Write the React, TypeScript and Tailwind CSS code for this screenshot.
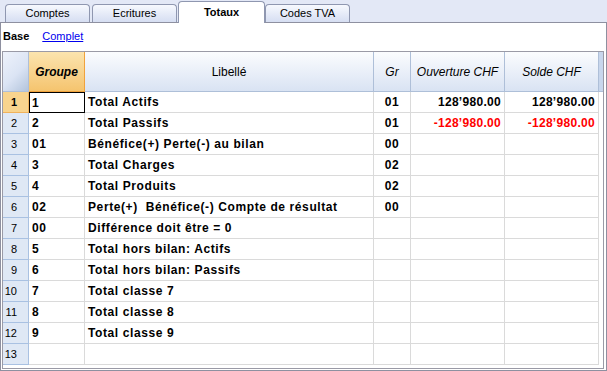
import React from "react";

type Row = {
  groupe: string;
  libelle: string;
  gr: string;
  ouverture?: string;
  solde?: string;
  negative?: boolean;
};

const rows: Row[] = [
  { groupe: "1", libelle: "Total Actifs", gr: "01", ouverture: "128’980.00", solde: "128’980.00" },
  { groupe: "2", libelle: "Total Passifs", gr: "01", ouverture: "-128’980.00", solde: "-128’980.00", negative: true },
  { groupe: "01", libelle: "Bénéfice(+) Perte(-) au bilan", gr: "00" },
  { groupe: "3", libelle: "Total Charges", gr: "02" },
  { groupe: "4", libelle: "Total Produits", gr: "02" },
  { groupe: "02", libelle: "Perte(+)\u00a0 Bénéfice(-) Compte de résultat", gr: "00" },
  { groupe: "00", libelle: "Différence doit être = 0", gr: "" },
  { groupe: "5", libelle: "Total hors bilan: Actifs", gr: "" },
  { groupe: "6", libelle: "Total hors bilan: Passifs", gr: "" },
  { groupe: "7", libelle: "Total classe 7", gr: "" },
  { groupe: "8", libelle: "Total classe 8", gr: "" },
  { groupe: "9", libelle: "Total classe 9", gr: "" },
  { groupe: "", libelle: "", gr: "" },
];

const tabs = ["Comptes", "Ecritures", "Totaux", "Codes TVA"];

export default function App() {
  return (
    <div
      className="w-[607px] h-[371px] bg-[#e3e8f6] flex flex-col overflow-hidden text-black"
      style={{ fontFamily: '"Liberation Sans", Arial, sans-serif' }}
    >
      {/* tab strip */}
      <div className="h-[22px] flex items-end pl-[5px] gap-[2px] relative z-10">
        {tabs.map((t) => {
          const active = t === "Totaux";
          return active ? (
            <div
              key={t}
              className="w-[87px] h-[22px] -mb-[1px] -ml-[1px] -mr-[2px] bg-white border border-b-0 border-[#8f97b0] rounded-t-[4px] flex items-center justify-center text-[11px] font-bold pb-[1px]"
            >
              {t}
            </div>
          ) : (
            <div
              key={t}
              className="w-[85px] h-[18px] bg-gradient-to-b from-[#f7f9fe] to-[#d6def2] border border-b-0 border-[#8f97b0] rounded-t-[4px] flex items-center justify-center text-[11px]"
            >
              {t}
            </div>
          );
        })}
      </div>

      {/* panel */}
      <div className="flex-1 bg-white border border-[#8e90a0] pl-[1px] pr-[2px] pb-[1px] flex flex-col">
        <div className="h-[28px] flex items-center gap-[13px] pl-[1px] text-[11px] pb-[1px]">
          <span className="font-bold">Base</span>
          <span className="text-[#0000ee] underline">Complet</span>
        </div>

        <div className="flex-1 border border-[#9a9aa6] flex flex-col">
          {/* header */}
          <div className="grid grid-cols-[26px_56px_289px_37px_94px_94px_1fr] h-[40px] text-[12px]">
            <div className="bg-[linear-gradient(135deg,#eef2fb_0%,#dbe4f4_55%,#b3c4dc_100%)] border-r border-b border-[#aebfd8]" />
            <div className="bg-gradient-to-b from-[#fbe4ae] to-[#f5c46e] border-r border-b border-[#f0a23c] flex items-center justify-center font-bold italic">
              Groupe
            </div>
            <div className="bg-gradient-to-b from-[#fbfcfe] to-[#d9e3f3] border-r border-b border-[#aebfd8] flex items-center justify-center">
              Libellé
            </div>
            <div className="bg-gradient-to-b from-[#fbfcfe] to-[#d9e3f3] border-r border-b border-[#aebfd8] flex items-center justify-center italic">
              Gr
            </div>
            <div className="bg-gradient-to-b from-[#fbfcfe] to-[#d9e3f3] border-r border-b border-[#aebfd8] flex items-center justify-center italic">
              Ouverture CHF
            </div>
            <div className="bg-gradient-to-b from-[#fbfcfe] to-[#d9e3f3] border-r border-b border-[#aebfd8] flex items-center justify-center italic">
              Solde CHF
            </div>
            <div className="bg-[#c8d6ec] border-b border-[#aebfd8]" />
          </div>

          {/* rows */}
          {rows.map((r, i) => {
            const sel = i === 0;
            const valColor = r.negative ? "text-[#ff0000]" : "text-black";
            return (
              <div
                key={i}
                className="grid grid-cols-[26px_56px_289px_37px_94px_94px_1fr] h-[21px] text-[12px] font-bold tracking-[0.6px]"
              >
                <div
                  className={
                    sel
                      ? "bg-[#f8d48e] border-r border-b border-[#f0b25c] flex items-center justify-end pr-[11px] text-[11px] font-bold tracking-normal"
                      : "bg-[#dfe8f5] border-r border-b border-[#a9c1e2] flex items-center justify-end pr-[11px] text-[11px] font-normal tracking-normal"
                  }
                >
                  {i + 1}
                </div>
                <div
                  className={
                    sel
                      ? "border border-black flex items-center pl-[2px]"
                      : "border-r border-b border-[#dadada] flex items-center pl-[3px]"
                  }
                >
                  {r.groupe}
                </div>
                <div className="border-r border-b border-[#dadada] flex items-center pl-[3px] whitespace-nowrap overflow-hidden">
                  {r.libelle}
                </div>
                <div className="border-r border-b border-[#dadada] flex items-center justify-center">
                  {r.gr}
                </div>
                <div className={`border-r border-b border-[#dadada] flex items-center justify-end pr-[3px] tracking-[0.3px] ${valColor}`}>
                  {r.ouverture}
                </div>
                <div className={`border-r border-b border-[#dadada] flex items-center justify-end pr-[3px] tracking-[0.3px] ${valColor}`}>
                  {r.solde}
                </div>
                <div className="bg-white" />
              </div>
            );
          })}
          <div className="flex-1 bg-white" />
        </div>
      </div>
    </div>
  );
}
